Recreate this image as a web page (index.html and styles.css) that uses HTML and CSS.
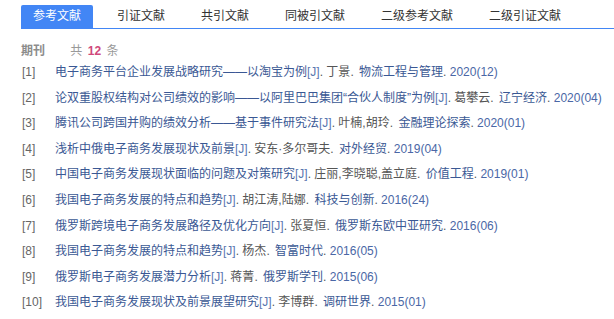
FILE: index.html
```html
<!DOCTYPE html>
<html lang="zh-CN">
<head>
    <meta charset="UTF-8">
    <meta name="viewport" content="width=device-width, initial-scale=1.0">
    <title>参考文献</title>
    <link rel="stylesheet" href="styles.css">
</head>
<body>

    <div class="page">
        <!-- Tabs -->
        <ul class="tabs">
            <li class="tab active">参考文献</li>
            <li class="tab">引证文献</li>
            <li class="tab">共引文献</li>
            <li class="tab">同被引文献</li>
            <li class="tab">二级参考文献</li>
            <li class="tab">二级引证文献</li>
        </ul>

        <div class="list-title">
            <span class="type">期刊</span>
            <span class="total">共 <b>12</b> 条</span>
        </div>

        <ul class="refs">
            <li><span class="num">[1]</span><span class="t">电子商务平台企业发展战略研究——以淘宝为例</span><span class="j">[J]</span>. <span class="au">丁景</span>. <span class="src">物流工程与管理</span>. <span class="yr">2020(12)</span></li>
            <li><span class="num">[2]</span><span class="t">论双重股权结构对公司绩效的影响——以阿里巴巴集团“合伙人制度”为例</span><span class="j">[J]</span>. <span class="au">葛攀云</span>. <span class="src">辽宁经济</span>. <span class="yr">2020(04)</span></li>
            <li><span class="num">[3]</span><span class="t">腾讯公司跨国并购的绩效分析——基于事件研究法</span><span class="j">[J]</span>. <span class="au">叶楠,胡玲</span>. <span class="src">金融理论探索</span>. <span class="yr">2020(01)</span></li>
            <li><span class="num">[4]</span><span class="t">浅析中俄电子商务发展现状及前景</span><span class="j">[J]</span>. <span class="au">安东·多尔哥夫</span>. <span class="src">对外经贸</span>. <span class="yr">2019(04)</span></li>
            <li><span class="num">[5]</span><span class="t">中国电子商务发展现状面临的问题及对策研究</span><span class="j">[J]</span>. <span class="au">庄丽,李晓聪,盖立庭</span>. <span class="src">价值工程</span>. <span class="yr">2019(01)</span></li>
            <li><span class="num">[6]</span><span class="t">我国电子商务发展的特点和趋势</span><span class="j">[J]</span>. <span class="au">胡江涛,陆娜</span>. <span class="src">科技与创新</span>. <span class="yr">2016(24)</span></li>
            <li><span class="num">[7]</span><span class="t">俄罗斯跨境电子商务发展路径及优化方向</span><span class="j">[J]</span>. <span class="au">张夏恒</span>. <span class="src">俄罗斯东欧中亚研究</span>. <span class="yr">2016(06)</span></li>
            <li><span class="num">[8]</span><span class="t">我国电子商务发展的特点和趋势</span><span class="j">[J]</span>. <span class="au">杨杰</span>. <span class="src">智富时代</span>. <span class="yr">2016(05)</span></li>
            <li><span class="num">[9]</span><span class="t">俄罗斯电子商务发展潜力分析</span><span class="j">[J]</span>. <span class="au">蒋菁</span>. <span class="src">俄罗斯学刊</span>. <span class="yr">2015(06)</span></li>
            <li><span class="num">[10]</span><span class="t">我国电子商务发展现状及前景展望研究</span><span class="j">[J]</span>. <span class="au">李博群</span>. <span class="src">调研世界</span>. <span class="yr">2015(01)</span></li>
        </ul>
    </div>

</body>
</html>
```

FILE: styles.css
```css
/* General */
body {
    margin: 0;
    padding: 0;
    background-color: #fff;
    font-family: "Liberation Sans", "Noto Sans CJK SC", sans-serif;
    font-size: 12px;
    color: #555;
}

.page {
    padding: 5px 0 0 21px;
}

/* Tabs */
.tabs {
    list-style: none;
    margin: 0;
    padding: 0;
    display: flex;
    border-bottom: 1px solid #4286f5;
}

.tab {
    padding: 0 12px;
    margin-right: 12px;
    height: 23px;
    line-height: 23px;
    color: #333;
    cursor: pointer;
}

.tab.active {
    background-color: #4286f5;
    color: #fff;
    border-radius: 2px 2px 0 0;
}

/* Title row */
.list-title {
    margin-top: 13px;
    line-height: 18px;
    height: 18px;
}

.list-title .type {
    font-weight: bold;
    color: #8c8c8c;
    margin-right: 22px;
}

.list-title .total {
    color: #999;
}

.list-title .total b {
    color: #d0487b;
    margin: 0 2px;
}

/* References */
.refs {
    list-style: none;
    margin: 0;
    padding: 0 0 0 1px;
}

.refs li {
    height: 25.6px;
    line-height: 25.6px;
    white-space: nowrap;
    color: #555;
}

.refs .num {
    display: inline-block;
    width: 33px;
    color: #666;
}

.refs .t,
.refs .src {
    color: #3a5894;
}

.refs .j {
    color: #5a77b0;
}

.refs .au {
    color: #555;
}

.refs .src {
    margin-left: 2px;
}

.refs .yr {
    color: #4a67a6;
}
```
